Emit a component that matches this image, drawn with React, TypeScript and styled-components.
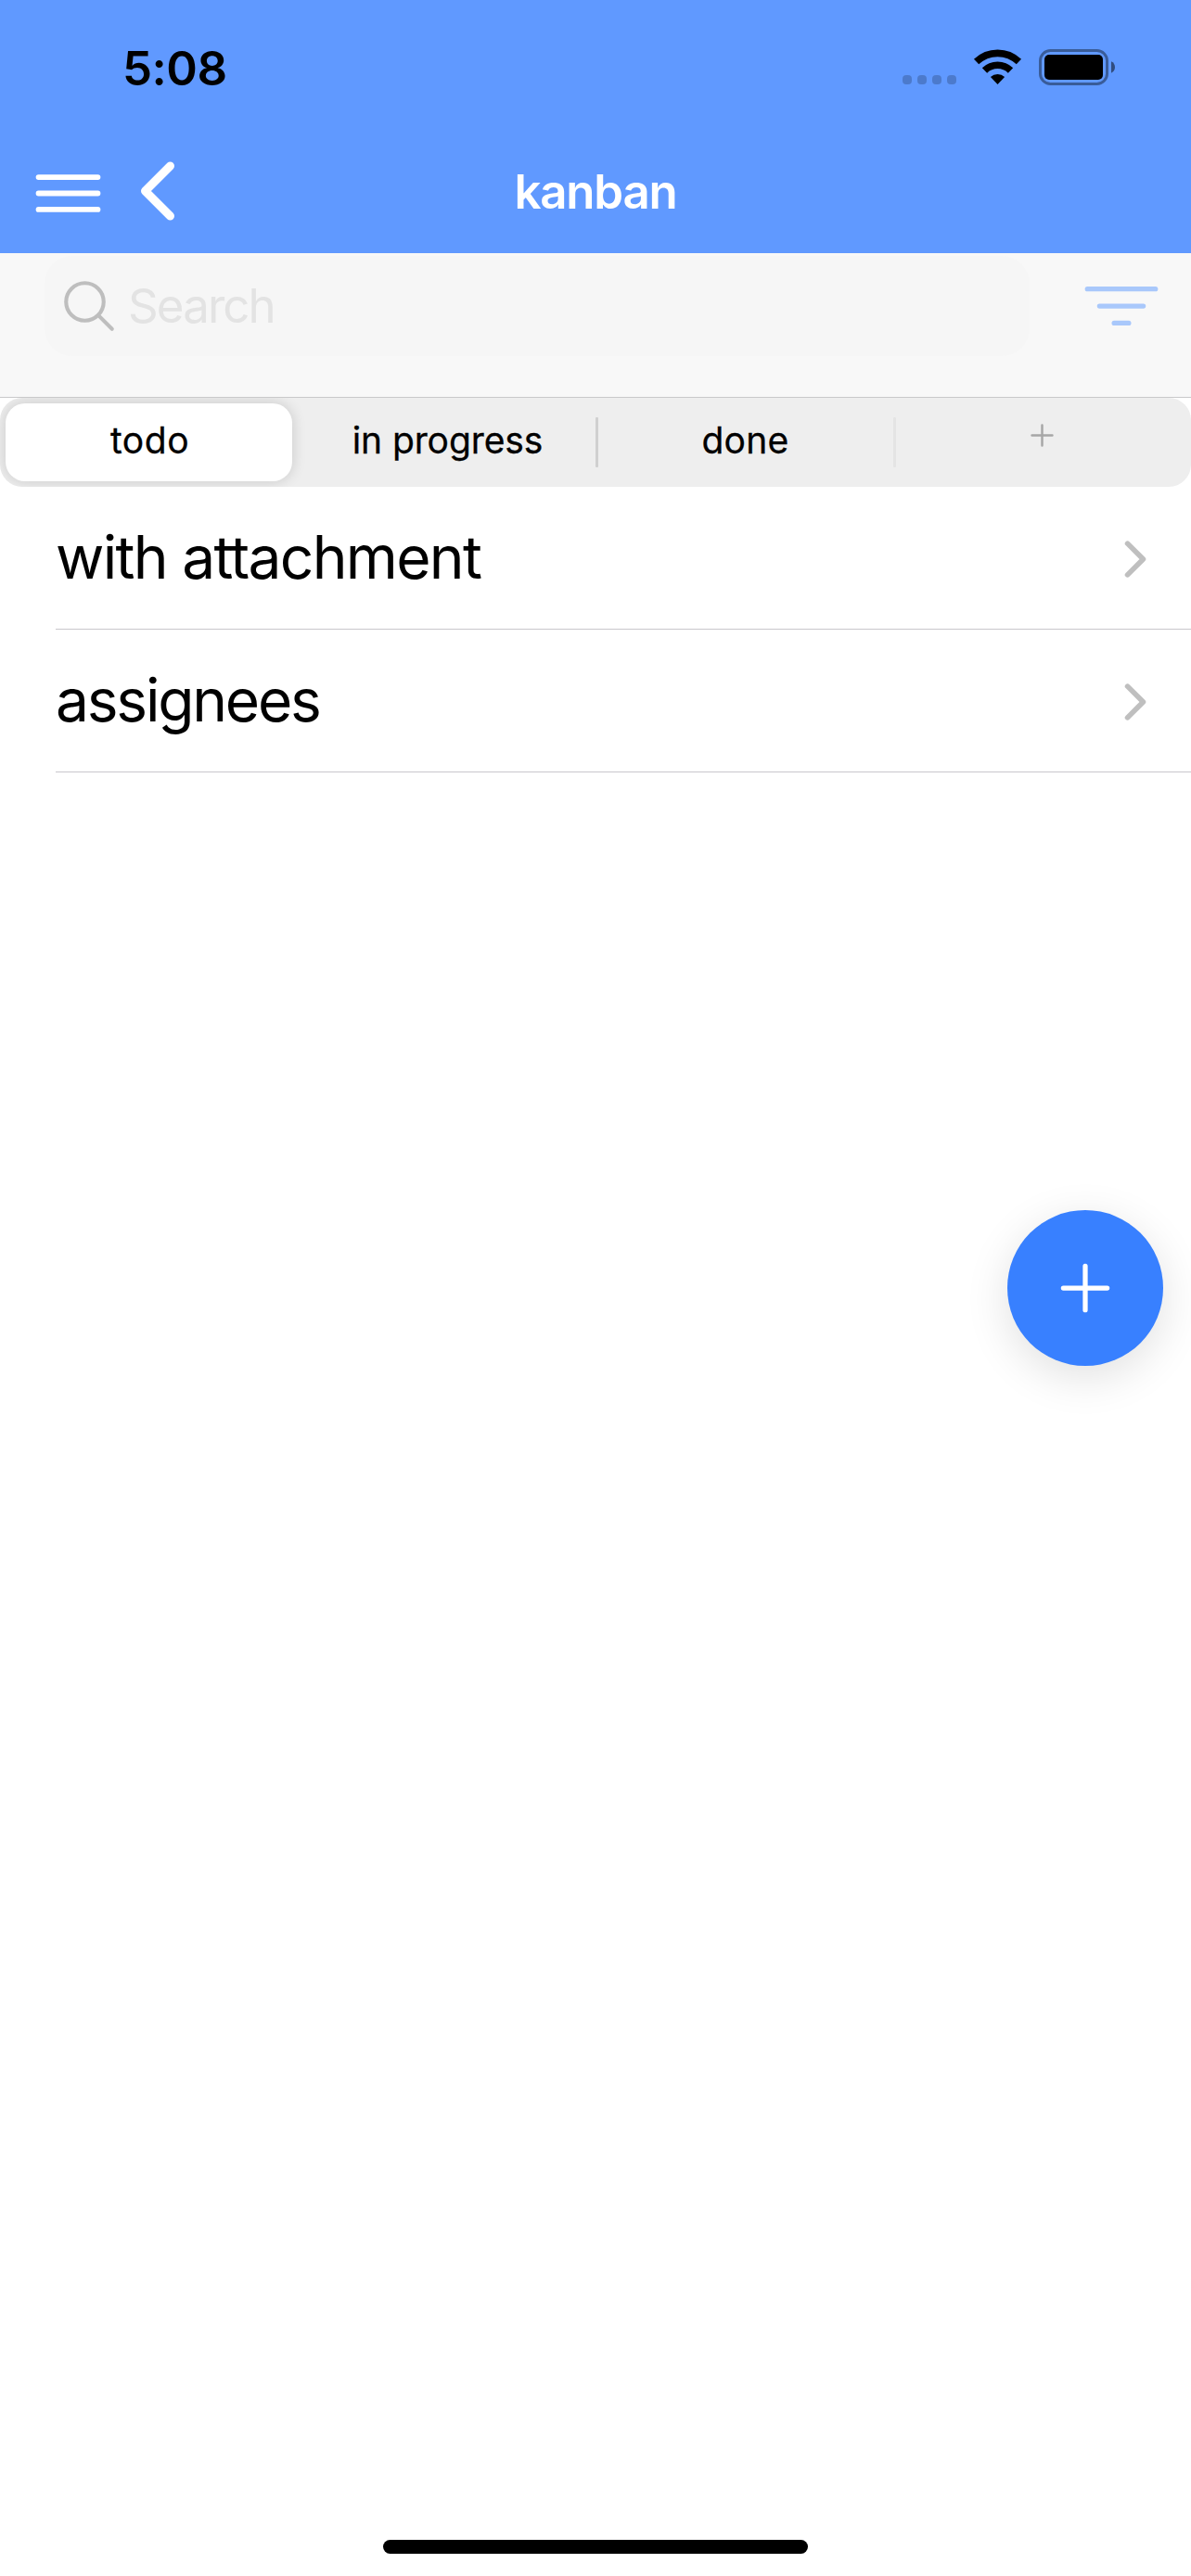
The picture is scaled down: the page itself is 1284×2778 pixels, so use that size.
import React from "react";
import styled, { createGlobalStyle } from "styled-components";

const GlobalStyle = createGlobalStyle`
  * { box-sizing: border-box; }
  body { margin: 0; background: #fff; }
`;

const Screen = styled.div`
  position: relative;
  display: flex;
  flex-direction: column;
  width: 1284px;
  height: 2778px;
  overflow: hidden;
  background: #fff;
  color: #000;
  font-family: Inter, "Liberation Sans", sans-serif;
`;

const Header = styled.header`
  display: flex;
  flex-direction: column;
  height: 273px;
  background: #6099ff;
`;

const StatusBar = styled.div`
  display: flex;
  align-items: center;
  justify-content: space-between;
  height: 141px;
  padding: 3px 82px 0 132px;
`;

const Clock = styled.span`
  margin-top: 3px;
  font-size: 51px;
  font-weight: 600;
  line-height: 60px;
  letter-spacing: -0.5px;
`;

const StatusIcons = styled.div`
  display: flex;
  align-items: center;
`;

const NavBar = styled.div`
  display: grid;
  grid-template-columns: 1fr auto 1fr;
  align-items: center;
  height: 132px;
  padding: 0 27px;
  color: #fff;
`;

const NavButtons = styled.div`
  display: flex;
  align-items: center;
  gap: 2px;
`;

const IconSlot = styled.span<{ $shift?: number }>`
  display: flex;
  margin-top: ${(p) => p.$shift ?? 0}px;
`;

const Title = styled.h1`
  margin: 0;
  font-size: 51px;
  font-weight: 600;
  line-height: 60px;
  letter-spacing: -1.2px;
`;

const SearchToolbar = styled.div`
  display: flex;
  align-items: flex-start;
  justify-content: space-between;
  height: 156px;
  padding: 3px 33px 0 48px;
  background: #f8f8f8;
  border-bottom: 1px solid #c9c9ca;
`;

const SearchField = styled.label`
  display: flex;
  align-items: center;
  gap: 9px;
  width: 1062px;
  height: 108px;
  padding-left: 15px;
  border-radius: 30px;
  background: #f6f6f6;
`;

const Placeholder = styled.span`
  color: #e3e3e3;
  font-size: 51px;
  line-height: 60px;
  letter-spacing: -1.9px;
`;

const FilterButton = styled.div`
  display: flex;
  align-items: center;
  height: 108px;
`;

const Segment = styled.nav`
  display: grid;
  grid-template-columns: repeat(4, 1fr);
  height: 96px;
  border-radius: 24px;
  overflow: hidden;
  background: #eeeeee;
`;

const SegmentButton = styled.div<{ $divider?: string }>`
  display: flex;
  align-items: center;
  height: 96px;
  &::before {
    content: "";
    flex: none;
    width: 3px;
    height: 54px;
    border-radius: 1px;
    background: ${(p) => p.$divider ?? "transparent"};
  }
`;

const SegmentLabel = styled.span<{ $selected?: boolean; $tracking?: number }>`
  display: flex;
  align-items: center;
  justify-content: center;
  width: 309px;
  height: 84px;
  margin: 0 6px 0 3px;
  padding: 0 0 4px 2px;
  border-radius: 21px;
  background: ${(p) => (p.$selected ? "#fff" : "transparent")};
  box-shadow: ${(p) => (p.$selected ? "0 0 15px rgba(0, 0, 0, 0.16)" : "none")};
  font-size: 39px;
  font-weight: 400;
  line-height: 48px;
  letter-spacing: ${(p) => p.$tracking ?? 0.3}px;
  -webkit-text-stroke: 0.3px #000;
`;

const AddColumn = styled.span`
  display: flex;
  margin: -12px 2px 0 0;
`;

const List = styled.ul`
  flex: 1;
  margin: 0;
  padding: 0;
  list-style: none;
`;

const Row = styled.li`
  display: flex;
  align-items: center;
  justify-content: space-between;
  height: 154px;
  margin-left: 60px;
  padding-right: 30px;
  border-bottom: 1px solid #c8c7cc;
  font-size: 64px;
  line-height: 78px;
`;

const RowText = styled.span<{ $tracking: number }>`
  margin-bottom: 2px;
  letter-spacing: ${(p) => p.$tracking}px;
`;

const Fab = styled.button`
  position: absolute;
  right: 30px;
  top: 1305px;
  display: flex;
  align-items: center;
  justify-content: center;
  width: 168px;
  height: 168px;
  padding: 0;
  border: 0;
  border-radius: 50%;
  background: #3880ff;
  box-shadow: 0 12px 48px rgba(0, 0, 0, 0.12);
`;

const HomeIndicator = styled.div`
  align-self: center;
  width: 458px;
  height: 15px;
  margin-bottom: 24px;
  border-radius: 8px;
  background: #000;
`;

type GlyphProps = { d: string; size: number; color: string; weight?: number };

const Glyph = ({ d, size, color, weight = 32 }: GlyphProps) => (
  <svg width={size} height={size} viewBox="0 0 512 512" fill="none" stroke={color} strokeWidth={weight} strokeLinecap="round" strokeLinejoin="round">
    <path d={d} />
  </svg>
);

const paths = {
  menu: "M80 160h352M80 256h352M80 352h352",
  back: "M328 112L184 256l144 144",
  forward: "M184 112l144 144-144 144",
  search: "M221.09 64a157.09 157.09 0 10157.09 157.09A157.1 157.1 0 00221.09 64zM338.29 338.29L448 448",
  filter: "M32 144h448M112 256h288M208 368h96",
  add: "M256 112v288M400 256H112",
};

const StatusGlyphs = () => (
  <svg width="230" height="40" viewBox="972 52 230 40">
    <g fill="#000" fillOpacity="0.2">
      {[973, 989, 1005, 1021].map((x) => (
        <rect key={x} x={x} y="81" width="10" height="10" rx="4" />
      ))}
    </g>
    <g fill="none" stroke="#000" strokeWidth="7.6">
      <path d="M1052.6 66.6A33 33 0 0 1 1098.4 66.6" />
      <path d="M1061.5 76A20 20 0 0 1 1089.5 76" />
    </g>
    <path d="M1075.5 91l-7.6-8a11 11 0 0 1 15.2 0z" />
    <rect x="1121.5" y="54.5" width="72" height="36" rx="11" fill="none" stroke="#000" strokeOpacity="0.4" strokeWidth="3" />
    <rect x="1126" y="59" width="63" height="27" rx="5" />
    <path d="M1198 66.3c2.6 1.2 4 3.5 4 6.2s-1.4 5-4 6.2z" fillOpacity="0.5" />
  </svg>
);

const cards = [
  { name: "with attachment", tracking: -1.7 },
  { name: "assignees", tracking: -2.2 },
];

export default function App() {
  return (
    <Screen>
      <GlobalStyle />
      <Header>
        <StatusBar>
          <Clock>5:08</Clock>
          <StatusIcons>
            <StatusGlyphs />
          </StatusIcons>
        </StatusBar>
        <NavBar>
          <NavButtons>
            <IconSlot $shift={3}>
              <Glyph d={paths.menu} size={93} color="#fff" />
            </IconSlot>
            <IconSlot $shift={-2}>
              <Glyph d={paths.back} size={96} color="#fff" weight={48} />
            </IconSlot>
          </NavButtons>
          <Title>kanban</Title>
        </NavBar>
      </Header>
      <SearchToolbar>
        <SearchField>
          <Glyph d={paths.search} size={66} color="#bebebe" />
          <Placeholder>Search</Placeholder>
        </SearchField>
        <FilterButton>
          <Glyph d={paths.filter} size={84} color="#a9c8fb" />
        </FilterButton>
      </SearchToolbar>
      <Segment>
        <SegmentButton>
          <SegmentLabel $selected $tracking={0.5}>todo</SegmentLabel>
        </SegmentButton>
        <SegmentButton>
          <SegmentLabel $tracking={-0.1}>in progress</SegmentLabel>
        </SegmentButton>
        <SegmentButton $divider="#d0d0d0">
          <SegmentLabel>done</SegmentLabel>
        </SegmentButton>
        <SegmentButton $divider="#e4e4e4">
          <SegmentLabel>
            <AddColumn>
              <Glyph d={paths.add} size={39} color="#a6a6a6" />
            </AddColumn>
          </SegmentLabel>
        </SegmentButton>
      </Segment>
      <List>
        {cards.map((card) => (
          <Row key={card.name}>
            <RowText $tracking={card.tracking}>{card.name}</RowText>
            <IconSlot $shift={3}>
              <Glyph d={paths.forward} size={60} color="#bfbfbf" weight={48} />
            </IconSlot>
          </Row>
        ))}
      </List>
      <Fab aria-label="Add card">
        <Glyph d={paths.add} size={84} color="#fff" />
      </Fab>
      <HomeIndicator />
    </Screen>
  );
}
